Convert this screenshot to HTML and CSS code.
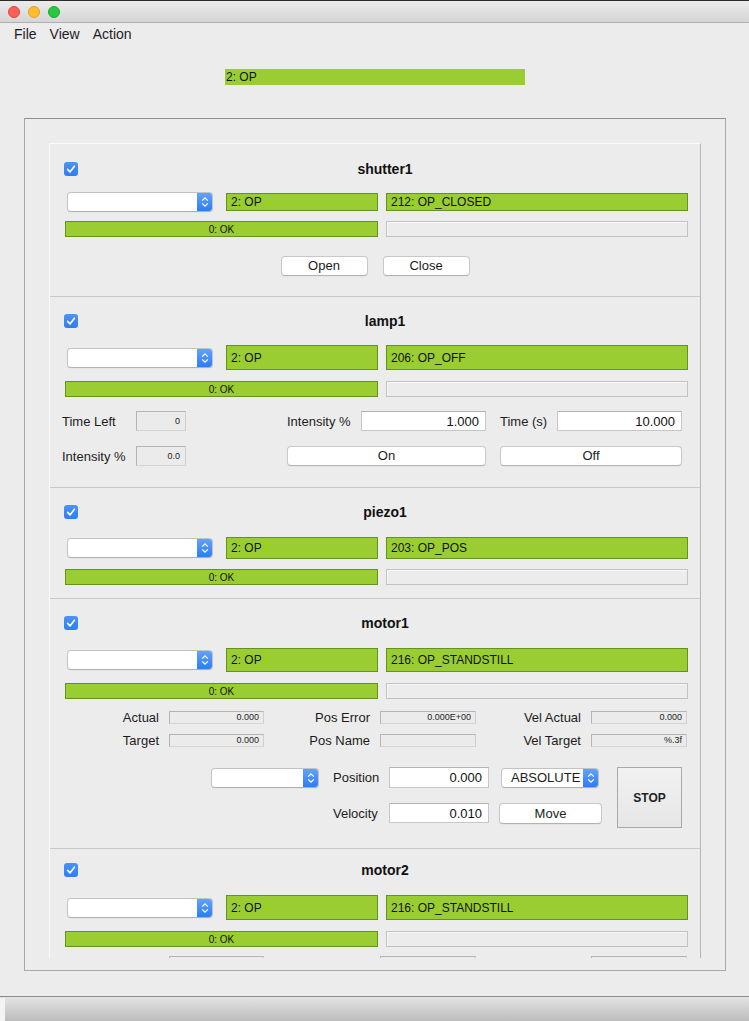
FILE: index.html
```html
<!DOCTYPE html>
<html>
<head>
<meta charset="utf-8">
<link rel="stylesheet" href="styles.css">
</head>
<body>
<div class="titlebar">
  <span class="light tl-red"></span><span class="light tl-yellow"></span><span class="light tl-green"></span>
</div>
<div class="menubar"><span>File</span><span>View</span><span>Action</span></div>
<div class="topstatus">2: OP</div>
<div class="frame">
  <div class="viewport">

    <div class="panel p-shutter">
      <div class="titlerow"><span class="check"><svg viewBox="0 0 14 14"><path d="M3.6 7.4 L6 9.9 L10.4 4.2" stroke="#fff" stroke-width="1.6" fill="none" stroke-linecap="round" stroke-linejoin="round"/></svg></span><span class="title">shutter1</span></div>
      <div class="row2 r20">
        <div class="combo"><span class="combo-text"></span><span class="combo-arrow"><svg viewBox="0 0 16 20"><path d="M5.2 8.6 L8 5.8 L10.8 8.6 M5.2 11.4 L8 14.2 L10.8 11.4" stroke="#fff" stroke-width="1.3" fill="none"/></svg></span></div>
        <div class="green g1 thin">2: OP</div>
        <div class="green g2 thin">212: OP_CLOSED</div>
      </div>
      <div class="row3"><div class="green ok">0: OK</div><div class="empty"></div></div>
      <div class="btnrow"><button class="btn">Open</button><button class="btn">Close</button></div>
    </div>

    <div class="panel p-lamp">
      <div class="titlerow"><span class="check"><svg viewBox="0 0 14 14"><path d="M3.6 7.4 L6 9.9 L10.4 4.2" stroke="#fff" stroke-width="1.6" fill="none" stroke-linecap="round" stroke-linejoin="round"/></svg></span><span class="title">lamp1</span></div>
      <div class="row2 r25">
        <div class="combo"><span class="combo-text"></span><span class="combo-arrow"><svg viewBox="0 0 16 20"><path d="M5.2 8.6 L8 5.8 L10.8 8.6 M5.2 11.4 L8 14.2 L10.8 11.4" stroke="#fff" stroke-width="1.3" fill="none"/></svg></span></div>
        <div class="green g1">2: OP</div>
        <div class="green g2">206: OP_OFF</div>
      </div>
      <div class="row3"><div class="green ok">0: OK</div><div class="empty"></div></div>
      <div class="lampgrid">
        <span class="lbl c1">Time Left</span><div class="ro small">0</div>
        <span class="lbl c4">Intensity %</span><div class="input c5">1.000</div>
        <span class="lbl c7">Time (s)</span><div class="input c8">10.000</div>
        <span class="lbl c1">Intensity %</span><div class="ro small">0.0</div>
        <button class="btn on">On</button><button class="btn off">Off</button>
      </div>
    </div>

    <div class="panel p-piezo">
      <div class="titlerow"><span class="check"><svg viewBox="0 0 14 14"><path d="M3.6 7.4 L6 9.9 L10.4 4.2" stroke="#fff" stroke-width="1.6" fill="none" stroke-linecap="round" stroke-linejoin="round"/></svg></span><span class="title">piezo1</span></div>
      <div class="row2 r22">
        <div class="combo"><span class="combo-text"></span><span class="combo-arrow"><svg viewBox="0 0 16 20"><path d="M5.2 8.6 L8 5.8 L10.8 8.6 M5.2 11.4 L8 14.2 L10.8 11.4" stroke="#fff" stroke-width="1.3" fill="none"/></svg></span></div>
        <div class="green g1">2: OP</div>
        <div class="green g2">203: OP_POS</div>
      </div>
      <div class="row3"><div class="green ok">0: OK</div><div class="empty"></div></div>
    </div>

    <div class="panel p-motor1">
      <div class="titlerow"><span class="check"><svg viewBox="0 0 14 14"><path d="M3.6 7.4 L6 9.9 L10.4 4.2" stroke="#fff" stroke-width="1.6" fill="none" stroke-linecap="round" stroke-linejoin="round"/></svg></span><span class="title">motor1</span></div>
      <div class="row2 r24">
        <div class="combo"><span class="combo-text"></span><span class="combo-arrow"><svg viewBox="0 0 16 20"><path d="M5.2 8.6 L8 5.8 L10.8 8.6 M5.2 11.4 L8 14.2 L10.8 11.4" stroke="#fff" stroke-width="1.3" fill="none"/></svg></span></div>
        <div class="green g1">2: OP</div>
        <div class="green g2">216: OP_STANDSTILL</div>
      </div>
      <div class="row3"><div class="green ok">0: OK</div><div class="empty"></div></div>
      <div class="motorgrid">
        <span class="mlbl">Actual</span><div class="ro tiny">0.000</div>
        <span class="mlbl">Pos Error</span><div class="ro tiny">0.000E+00</div>
        <span class="mlbl">Vel Actual</span><div class="ro tiny">0.000</div>
        <span class="mlbl">Target</span><div class="ro tiny">0.000</div>
        <span class="mlbl">Pos Name</span><div class="ro tiny"></div>
        <span class="mlbl">Vel Target</span><div class="ro tiny">%.3f</div>
      </div>
      <div class="ctrlgrid">
        <div class="combo cm1"><span class="combo-text"></span><span class="combo-arrow"><svg viewBox="0 0 16 20"><path d="M5.2 8.6 L8 5.8 L10.8 8.6 M5.2 11.4 L8 14.2 L10.8 11.4" stroke="#fff" stroke-width="1.3" fill="none"/></svg></span></div>
        <span class="lbl clbl">Position</span>
        <div class="input cin">0.000</div>
        <div class="combo cm2"><span class="combo-text">ABSOLUTE</span><span class="combo-arrow"><svg viewBox="0 0 16 20"><path d="M5.2 8.6 L8 5.8 L10.8 8.6 M5.2 11.4 L8 14.2 L10.8 11.4" stroke="#fff" stroke-width="1.3" fill="none"/></svg></span></div>
        <button class="stop">STOP</button>
        <span class="lbl clbl r2">Velocity</span>
        <div class="input cin r2">0.010</div>
        <button class="btn move">Move</button>
      </div>
    </div>

    <div class="panel p-motor2">
      <div class="titlerow"><span class="check"><svg viewBox="0 0 14 14"><path d="M3.6 7.4 L6 9.9 L10.4 4.2" stroke="#fff" stroke-width="1.6" fill="none" stroke-linecap="round" stroke-linejoin="round"/></svg></span><span class="title">motor2</span></div>
      <div class="row2 r25">
        <div class="combo"><span class="combo-text"></span><span class="combo-arrow"><svg viewBox="0 0 16 20"><path d="M5.2 8.6 L8 5.8 L10.8 8.6 M5.2 11.4 L8 14.2 L10.8 11.4" stroke="#fff" stroke-width="1.3" fill="none"/></svg></span></div>
        <div class="green g1">2: OP</div>
        <div class="green g2">216: OP_STANDSTILL</div>
      </div>
      <div class="row3"><div class="green ok">0: OK</div><div class="empty"></div></div>
      <div class="motorgrid m2">
        <span class="mlbl"></span><div class="ro tiny"></div>
        <span class="mlbl"></span><div class="ro tiny"></div>
        <span class="mlbl"></span><div class="ro tiny"></div>
      </div>
    </div>

  </div>
</div>
<div class="spacer"></div>
<div class="statusbar"><span class="grip"></span></div>
</body>
</html>
```
FILE: styles.css
```css
* { box-sizing: border-box; }
html, body { margin: 0; padding: 0; }
body {
  width: 749px;
  height: 1021px;
  overflow: hidden;
  background: #ececec;
  font-family: "Liberation Sans", Arial, sans-serif;
  color: #1c1c1c;
  display: flex;
  flex-direction: column;
}
.titlebar {
  height: 23px;
  flex: none;
  border-top: 1px solid #2b2b2b;
  border-bottom: 1px solid #b0b0b0;
  background: linear-gradient(#ebebeb, #d5d5d5);
  display: flex;
  align-items: center;
  gap: 8px;
  padding-left: 8px;
}
.light { width: 12px; height: 12px; border-radius: 50%; flex: none; }
.tl-red { background: #fe5f57; border: 0.5px solid #e0443e; }
.tl-yellow { background: #febc2e; border: 0.5px solid #dea123; }
.tl-green { background: #28c840; border: 0.5px solid #1aab29; }
.menubar {
  height: 24px;
  flex: none;
  padding: 3px 0 0 14px;
  display: flex;
  gap: 13px;
  font-size: 14px;
  line-height: 16px;
  color: #1e1e1e;
}
.topstatus {
  flex: none;
  margin: 22px 0 0 225px;
  width: 300px;
  height: 16px;
  background: #9acd32;
  font-size: 12px;
  line-height: 16px;
  padding-left: 1px;
  color: #111;
}
.frame {
  flex: none;
  margin: 33px 0 0 24px;
  width: 702px;
  height: 853px;
  border: 1px solid #a8a8a8;
  border-top-color: #8f8f8f;
  padding: 24px 0 0 24px;
}
.viewport {
  width: 652px;
  height: 815px;
  overflow: hidden;
  border-top: 1px solid #fafafa;
  border-left: 1px solid #fafafa;
  border-right: 1px solid #b4b4b4;
}
.panel { border-bottom: 1px solid #c9c9c9; }
.p-shutter { padding: 18px 0 20px; }
.p-lamp { padding: 17px 0 21px; }
.p-piezo { padding: 17px 0 13px; }
.p-motor1 { padding: 17px 0 24px; }
.p-motor2 { padding: 14px 0 0; border-bottom: none; }

.titlerow {
  display: flex;
  align-items: center;
  height: 14px;
  padding: 0 8px 0 14px;
}
.check {
  width: 14px;
  height: 14px;
  border-radius: 3px;
  background: linear-gradient(#4b93f8, #2f7cf5);
  display: block;
  flex: none;
}
.check svg { display: block; width: 14px; height: 14px; }
.title {
  flex: 1;
  text-align: center;
  font-weight: bold;
  font-size: 14px;
  line-height: 14px;
  color: #111;
}

.row2 {
  display: flex;
  align-items: center;
  padding-left: 17px;
  margin-top: 18px;
}
.p-shutter .row2 { margin-top: 16px; }
.p-lamp .row2 { margin-top: 17px; }
.r20 { height: 20px; }
.r22 { height: 22px; }
.r24 { height: 24px; }
.r25 { height: 25px; }

.combo {
  width: 146px;
  height: 20px;
  flex: none;
  display: flex;
  background: #fff;
  border: 1px solid #c3c3c3;
  border-bottom-color: #b0b0b0;
  border-radius: 4px;
  overflow: hidden;
  box-shadow: 0 0.5px 0 rgba(0,0,0,0.05);
}
.combo-text {
  flex: 1;
  font-size: 13px;
  line-height: 18px;
  padding-left: 8px;
  color: #1c1c1c;
}
.combo-arrow {
  width: 16px;
  flex: none;
  background: linear-gradient(#64a5fb, #2c79f4);
  margin: -1px -1px -1px 0;
}
.combo-arrow svg { display: block; width: 16px; height: 20px; }

.green {
  background: #9acd32;
  border: 1px solid #62941c;
  font-size: 12px;
  color: #111;
  display: flex;
  align-items: center;
  padding-left: 4px;
  height: 100%;
}
.green.thin { height: 18px; }
.g1 { width: 152px; margin-left: 13px; }
.g2 { width: 302px; margin-left: 8px; }

.row3 {
  display: flex;
  height: 16px;
  padding-left: 15px;
  margin-top: 11px;
}
.p-shutter .row3 { margin-top: 9px; }
.p-piezo .row3 { margin-top: 10px; }
.green.ok {
  width: 313px;
  justify-content: center;
  padding-left: 0;
  font-size: 10px;
}
.empty {
  width: 302px;
  margin-left: 8px;
  border: 1px solid #c2c2c2;
  box-shadow: inset 1px 1px 0 #f8f8f8;
}

.btnrow {
  display: flex;
  justify-content: center;
  gap: 15px;
  margin-top: 19px;
}
.btn {
  font-family: "Liberation Sans", Arial, sans-serif;
  font-size: 13px;
  color: #1c1c1c;
  background: #fff;
  border: 1px solid #c8c8c8;
  border-bottom-color: #b3b3b3;
  border-radius: 4px;
  height: 20px;
  padding: 0;
  line-height: 18px;
  text-align: center;
  box-shadow: 0 0.5px 0.5px rgba(0,0,0,0.06);
}
.btnrow .btn { width: 87px; }

.lampgrid {
  display: grid;
  grid-template-columns: 74px 50px 101px 74px 125px 14px 57px 125px;
  grid-template-rows: 20px 20px;
  row-gap: 15px;
  padding-left: 12px;
  margin-top: 14px;
}
.lbl {
  font-size: 13px;
  line-height: 21px;
  white-space: nowrap;
  color: #1c1c1c;
}
.c1 { grid-column: 1; }
.c4 { grid-column: 4; }
.c5 { grid-column: 5; }
.c7 { grid-column: 7; }
.c8 { grid-column: 8; }
.btn.on { grid-column: 4 / 6; }
.btn.off { grid-column: 7 / 9; }

.ro {
  border: 1px solid #b4b4b4;
  border-right-color: #cfcfcf;
  border-bottom-color: #d4d4d4;
  background: #ebebeb;
  text-align: right;
  color: #222;
  white-space: nowrap;
  overflow: hidden;
}
.ro.small {
  font-size: 9px;
  line-height: 18px;
  padding-right: 5px;
}
.ro.tiny {
  font-size: 9px;
  line-height: 11px;
  padding-right: 4px;
}
.input {
  background: #fff;
  border: 1px solid #c6c6c6;
  border-top-color: #b2b2b2;
  font-size: 13px;
  line-height: 19px;
  text-align: right;
  padding-right: 6px;
  color: #111;
}

.motorgrid {
  display: grid;
  grid-template-columns: 104px 95px 116px 96px 115px 96px;
  grid-auto-rows: 13px;
  row-gap: 10px;
  padding-left: 15px;
  margin-top: 12px;
}
.motorgrid.m2 { margin-top: 9px; }
.mlbl {
  font-size: 13px;
  line-height: 13px;
  text-align: right;
  padding-right: 10px;
  white-space: nowrap;
  color: #1c1c1c;
}

.ctrlgrid {
  display: grid;
  grid-template-columns: 108px 14px 56px 100px 12px 98px 18px 65px;
  grid-template-rows: 21px 21px;
  row-gap: 15px;
  padding-left: 161px;
  margin-top: 20px;
}
.cm1 { grid-column: 1; grid-row: 1; width: 108px; align-self: center; }
.clbl { grid-column: 3; grid-row: 1; line-height: 21px; }
.cin { grid-column: 4; grid-row: 1; height: 21px; }
.clbl.r2, .cin.r2 { grid-row: 2; }
.cin.r2 { height: 20px; }
.cm2 { grid-column: 6; grid-row: 1; width: 98px; align-self: center; }
.cm2 .combo-text { padding-left: 9px; }
.stop {
  grid-column: 8;
  grid-row: 1 / 3;
  height: 61px;
  align-self: start;
  border: 1px solid #a9a9a9;
  background: linear-gradient(#f1f1f1, #e6e6e6);
  font-family: "Liberation Sans", Arial, sans-serif;
  font-weight: bold;
  font-size: 12px;
  color: #222;
  padding: 0;
}
.btn.move {
  grid-column: 6;
  grid-row: 2;
  margin: 0 -3px 0 -2px;
  height: 21px;
  line-height: 19px;
}

.spacer { flex: 1; }
.statusbar {
  height: 25px;
  flex: none;
  border-top: 1px solid #8a8a8a;
  background: linear-gradient(#e3e3e3, #bdbdbd);
  display: flex;
}
.grip {
  width: 5px;
  background: #f4f4f4;
  margin-top: 1px;
}
```
